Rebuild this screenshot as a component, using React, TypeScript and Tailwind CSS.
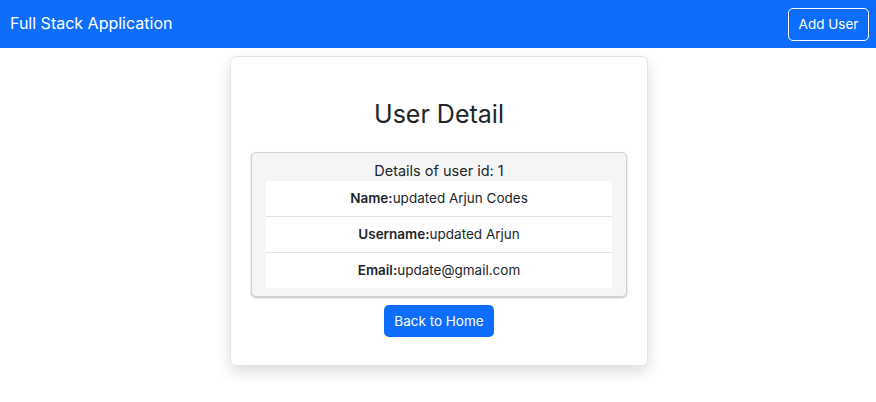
import React from "react";

export default function App() {
  const user = {
    id: 1,
    name: "updated Arjun Codes",
    username: "updated Arjun",
    email: "update@gmail.com"
  };

  return (
    <div
      className="min-h-[402px] bg-white text-[#212529]"
      style={{ fontFamily: "Inter, 'Noto Sans', sans-serif" }}
    >
      <nav className="flex h-12 items-center justify-between bg-[#0d6efd] pl-[10px] pr-[7px]">
        <span className="-mt-[2px] text-[16px] text-white">Full Stack Application</span>
        <button className="h-[33px] w-[81px] rounded-[5px] border border-white text-[13.5px] text-white">
          Add User
        </button>
      </nav>

      <div className="flex justify-center pl-[2px] pt-[8px]">
        <div className="w-[418px] rounded-[6px] border border-[#e3e3e8] px-[20px] pb-[28px] pt-[40px] shadow-[0_6px_14px_rgba(0,0,0,0.14)]">
          <h2 className="mb-[21px] text-center text-[25px] leading-[34px]">
            User Detail
          </h2>

          <div className="rounded-[5px] border border-[#d0d0d4] bg-[#f5f5f5] shadow-[0_1px_2px_rgba(0,0,0,0.25)]">
            <div className="pt-[7px] text-center text-[14.5px] leading-[21px]">
              Details of user id: {user.id}
            </div>
            <ul className="mx-[14px] mb-[8px] bg-white text-[13.5px]">
              <li className="flex h-[36px] items-center justify-center border-b border-[#dee2e6]">
                <b className="font-semibold">Name:</b>
                {user.name}
              </li>
              <li className="flex h-[36px] items-center justify-center border-b border-[#dee2e6]">
                <b className="font-semibold">Username:</b>
                {user.username}
              </li>
              <li className="flex h-[35px] items-center justify-center">
                <b className="font-semibold">Email:</b>
                {user.email}
              </li>
            </ul>
          </div>

          <div className="mt-[8px] flex justify-center">
            <button className="h-[32px] w-[110px] rounded-[5px] bg-[#0d6efd] text-[13.5px] text-white">
              Back to Home
            </button>
          </div>
        </div>
      </div>
    </div>
  );
}
